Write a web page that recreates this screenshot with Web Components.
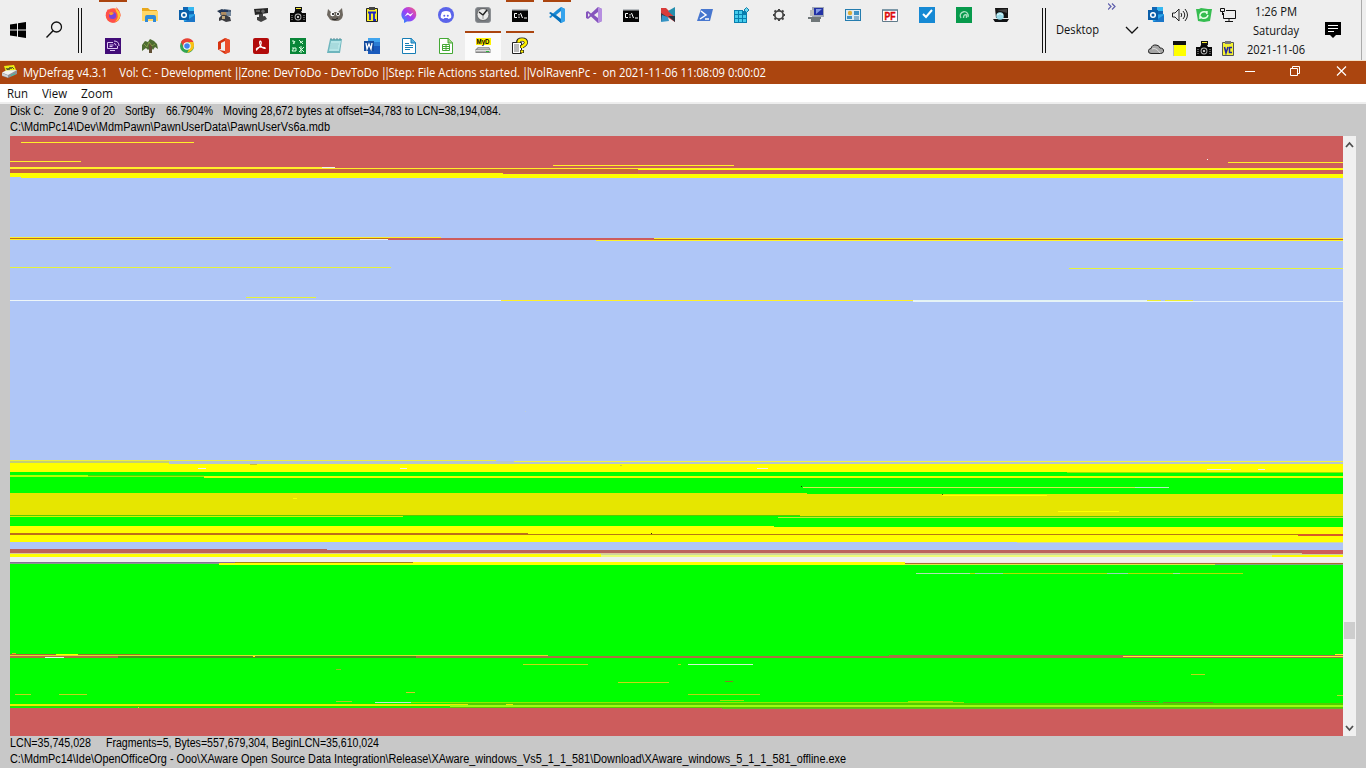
<!DOCTYPE html>
<html lang="en">
<head>
<meta charset="utf-8">
<title>MyDefrag v4.3.1</title>
<style>
html,body{margin:0;width:1366px;height:768px;overflow:hidden;background:#c8c8c8}
</style>
</head>
<body>
<desktop-screen></desktop-screen>
<script>
const ICONS = {
firefox:`<circle cx="8" cy="8.5" r="7.3" fill="#ff5a36"/><path d="M1 6 3 2 5 4Q9 0 12 3L11 0Q15 3 15.5 8C15 14 10 16 7 15.5Q1 14 1 6" fill="#ff4f4b"/><path d="M10 1Q15 4 15.3 8 15 13 10 15 15 10 11 4" fill="#ffc52f"/><circle cx="7.6" cy="8.5" r="3.6" fill="#7a45d8"/><path d="M4 6Q6 4 9 6L7 8 5 8" fill="#ff9a2a"/>`,
explorer:`<path d="M0 1h6l2 2h7v11H0z" fill="#e8a81c"/><path d="M0 4h16v10H0z" fill="#ffd766"/><path d="M3 15V10q0-2 2-2h7q2 0 2 2v5h-3v-3H6v3z" fill="#2f8ad8"/>`,
outlook:`<path d="M4 0h11v9H4z" fill="#1066b5"/><path d="M9 0h6v4H9z" fill="#35b8f1"/><path d="M4 8l12-1v8H5z" fill="#2aa4e8"/><path d="M5 15 16 8v7z" fill="#1a76c8"/><rect y="3" width="10" height="10" fill="#0a5ea8"/><circle cx="5" cy="8" r="2.3" fill="none" stroke="#fff" stroke-width="1.5"/>`,
scholar:`<path d="M1 4 6 2l4 2-5 3z" fill="#26364e"/><path d="M5 5 8 2l7 1v5l-6 2-5-2z" fill="#4d6078"/><circle cx="8" cy="6" r="3" fill="#b08d62"/><path d="M4 3h8v2H4z" fill="#24385c"/><path d="M10 5h5v4h-4z" fill="#75889c"/><path d="M3 11q3-4 6-3l5 2 1 4-5 1-4-2-3 1z" fill="#3c3c40"/><path d="M6 9h3v3H6z" fill="#c0a77c"/>`,
webcam:`<path d="M1 2 15 1v5L2 8z" fill="#262626"/><circle cx="10" cy="4.200" r="1.700" fill="#666"/><path d="M6 7h4v4H6zM4 10l8-1 2 3-6 3-4-2z" fill="#414141"/><path d="M3 4h4" stroke="#888"/>`,
camera:`<path d="M5 0h7v4H5z" fill="#111"/><path d="M6 1h5v1H6z" fill="#f7ec34"/><path d="M0 6h4l1-2h6l1 2h4v9H0z" fill="#080808"/><circle cx="8" cy="10" r="3.4" fill="#bbb"/><circle cx="8" cy="10" r="2.5" fill="#111"/><circle cx="8" cy="10" r="1" fill="#fff"/><path d="M2 8v5M14 8v5" stroke="#aaa" stroke-dasharray="1 1"/>`,
gimp:`<path d="M1 2 4 5h7l4-4 1 7q-1 6-7 6Q3 14 2 11L0 8z" fill="#6d675f"/><circle cx="5.500" cy="7" r="2.200" fill="#fff"/><circle cx="11" cy="7" r="2" fill="#fff"/><circle cx="6" cy="7" r="1"/><circle cx="11" cy="7" r="1"/><path d="M5 12q3 2 6-1" stroke="#222" fill="none"/>`,
clip:`<path d="M2.500 1.500h11v13h-11z" fill="#f7f02b" stroke="#222"/><path d="M5 0h6v3H5z" fill="#444"/><path d="M4 5.500h8M6 6v7M10 6v7h2" stroke="#1a22c9" stroke-width="1.800" fill="none"/>`,
messenger:`<defs><linearGradient id="m" x1="0" y1="1" x2="1" y2="0"><stop stop-color="#1595ff"/><stop offset=".5" stop-color="#a33bf5"/><stop offset="1" stop-color="#ff6178"/></linearGradient></defs><path d="M8 0a7.6 7.3 0 1 1-2 14.4L3 16v-3A7.4 7.4 0 0 1 8 0" fill="url(#m)"/><path d="m3.5 9.5 3-4 2.5 2 3.5-2-3 4-2.5-2z" fill="#fff"/>`,
discord:`<circle cx="8" cy="8" r="8" fill="#5b64ea"/><path d="M4 5q4-2 8 0 2 4 1 6l-2.5 1-1-1h-3l-1 1L3 11q-1-2 1-6" fill="#fff"/><circle cx="6.3" cy="8.7" r="1" fill="#5b64ea"/><circle cx="9.8" cy="8.7" r="1" fill="#5b64ea"/>`,
clock:`<rect x=".5" y=".5" width="15" height="15" rx="2.500" fill="#777b80" stroke="#8d9094"/><circle cx="8" cy="7.500" r="6" fill="#e9e9e9" stroke="#555" stroke-width=".8"/><path d="M4 5l4 3 4-5" stroke="#222" stroke-width="1.500" fill="none"/><path d="M8 8v4" stroke="#999"/>`,
cmd:`<path d="M0 2h16v13H0z" fill="#050505"/><path d="M0 2h16v1.500H0z" fill="#b8bcc0"/><path d="M5 6.500H2.500v4H5M7 7v1.500M7 9.500v1.500M8.500 6l2 5M12 11h3" stroke="#fff" fill="none"/>`,
vscode:`<path d="M12 0l4 2v12l-4 2L4 8.7 1.7 11 0 10l8-7zM12 4 7 8l5 4z" fill="#198ad5"/><path d="M0 6l1.7-1L12 12V16z" fill="#0870bb"/><path d="M12 0l4 2v12l-4 2z" fill="#36a4ed"/>`,
vs:`<path d="M12 0l4 2v12l-4 2L5 9.5 2 12 0 11V5l2-1 3 2.6zM12 5 8 8l4 3zM2 6v4l2-2z" fill="#8554bd"/><path d="M12 0l4 2v12l-4 2z" fill="#b68ee0"/>`,
neon:`<path d="M1 1 8 5v9H1z" fill="#303948"/><path d="m1 1 5 0 9 9v5L1 6z" fill="#d83b38"/><path d="M8 4l7-4v10l-4-3z" fill="#258fae"/><path d="m1 15 1-7 6 2 1 4z" fill="#3493c4"/><path d="m8 9 7 6V9z" fill="#263340"/>`,
ps:`<path d="M4 2h12l-3 12H0z" fill="#4777cf"/><path d="m4 4 5 4-6 4M8 12h4" stroke="#fff" stroke-width="1.5" fill="none"/>`,
reg:`<path d="M0 3h13v13H0z" fill="#087eae"/><path d="M1 4h3v3H1zm4 0h3v3H5zM1 8h3v3H1zm4 0h3v3H5zm4 0h3v3H9zM1 12h3v3H1zm4 0h3v3H5zm4 0h3v3H9z" fill="#45ccec"/><path d="M9 0h7v7h-3V4H9z" fill="#eee"/><path d="m12.500 .500 2.500 2.500-2.500 2.500L10 3z" fill="#6cdaf1" stroke="#167da8"/>`,
gear:`<circle cx="8" cy="8" r="4.200" fill="none" stroke="#444" stroke-width="1.800"/><path d="M8 2v2M8 12v2M2 8h2M12 8h2M3.500 3.500l1.500 1.500M11 11l1.500 1.500M12.500 3.500 11 5M5 11l-1.500 1.500" stroke="#444" stroke-width="2"/>`,
pc:`<path d="M4 0h12v10H4z" fill="#a0a7b5"/><path d="M6 1h9v7H6z" fill="#2332a5"/><path d="M8 2h6L8 7z" fill="#8399e5"/><path d="M7 10h5v2H7zM0 10h13v2H0zM3 12h9v3H3z" fill="#707779"/><path d="M2 3h4v6H2z" fill="#bbb"/>`,
card:`<path d="M0 2h16v12H0z" fill="#247cae"/><path d="M1 3h14v10H1z" fill="#dcebf3"/><circle cx="5" cy="6" r="2.2" fill="#dcac3b"/><path d="M2 9h5v3H2zM9 4h5v4H9z" fill="#3e91c6"/><path d="M9 10h5M9 12h5" stroke="#2e75a8"/>`,
pf:`<path d="M.5 2.5h15v12H.5z" fill="#fff" stroke="#607b8a"/><path d="M1 2h14v2H1z" fill="#7c98a8"/><text x="2.500" y="12.500" font-family="Liberation Sans" font-weight="700" font-size="10" textLength="11" lengthAdjust="spacingAndGlyphs" fill="#dc0808" stroke="#dc0808" stroke-width=".4">PF</text>`,
check:`<path d="M0 0h16v16H0z" fill="#1689d4"/><path d="m4 7 3 3 6-7" stroke="#fff" stroke-width="2" fill="none"/>`,
green:`<path d="M0 0h16v16H0z" fill="#079a4c"/><path d="M5 11a4 4 0 1 1 7-1M7.500 11q0-4 3-3v3" stroke="#a9dfbf" stroke-width="1.400" fill="none"/>`,
laptop:`<path d="M2 1h13v10H3z" fill="#151515"/><path d="M4 3 14 2v4z" fill="#444"/><path d="M0 12h16l-2 3H2z" fill="#101315"/><circle cx="7" cy="9" r="3.800" fill="#9bdbe9"/><path d="M4 8q3-3 6 0" stroke="#e7ffff" fill="none"/>`,
media:`<path d="M0 0h16v16H0z" fill="#420c78"/><path d="M8 4.500H2.500v6h10V8M5 12.500h5M4.500 7h4M4.500 8.500h3M9 3q5 0 5 5M9 5.500q2 0 2 2" stroke="#ddc7f2" fill="none"/>`,
tree:`<path d="M0 7 3 3 6 4 8 1l4 2 3 3 1 5-3-2-2 3-2-3-3 3-2-2-4 3z" fill="#4d6c31"/><path d="M7 6h3v9H7z" fill="#615035"/><path d="m2 6 3 3 2-5 3 4 3-2" stroke="#7f9b44" fill="none"/>`,
chrome:`<circle cx="8" cy="8" r="7" fill="#32a552"/><path d="M2 4A7.2 7.2 0 0 1 14.5 4H8L5 10z" fill="#e74235"/><path d="M14.5 4Q17 12 8 15l4-7-2-4z" fill="#fbc116"/><circle cx="8" cy="8" r="3.8" fill="#fff"/><circle cx="8" cy="8" r="2.8" fill="#3f83ed"/>`,
office:`<path d="M2 4 9 0l5 2v12l-5 2-6-4 6 1V3L5 5v6l-3 1z" fill="#d63311"/><path d="m9 0 5 2v12l-5 2z" fill="#ea4d2b"/>`,
acrobat:`<rect width="16" height="16" rx="2" fill="#b20b0b"/><path d="M7.500 3q2 2-1 6l-3 3q-1-2 4-3l4 .500q2 1 0 1-3-.500-4.500-4Q6 3 7.500 3z" fill="none" stroke="#fff" stroke-width="1.100"/>`,
xml:`<path d="M0 0h16v16H0z" fill="#098638"/><path d="M2 3h2v3M5 3 3 6M9 2l4 4M10 5l3-2M2 10h4v3H2l2-3M9 9l5 5M14 9l-5 5M11 8v7" stroke="#d9ffe1" fill="none"/>`,
notepad:`<path d="M3 1h12l-2 14H0z" fill="#6db5bd"/><path d="M4 3h10l-2 10H2z" fill="#b5e5e7"/><path d="M4 0v2M7 0v2M10 0v2M13 0v2" stroke="#568d98"/><path d="M4 6h8M3 8h8M3 10h8" stroke="#86bfc6" stroke-width=".6"/>`,
word:`<path d="M4 0h12v16H4z" fill="#185abd"/><path d="M4 0h12v4H4z" fill="#41a5ee"/><path d="M4 4h12v4H4z" fill="#2b7cd3"/><path d="M0 3h10v10H0z" fill="#144c9f"/><path d="m2 5 1 6 2-5 2 5 1-6" stroke="#fff" stroke-width="1.3" fill="none"/>`,
writer:`<path d="M1.5.5h9l4 4v11h-13z" fill="#fff" stroke="#167db5"/><path d="M10 0v5h5" fill="#5fb3df" stroke="#167db5"/><path d="M4 5.500h4M4 7.500h8M4 9.500h8M4 11.500h5" stroke="#167db5"/>`,
calc:`<path d="M1.5.5h9l4 4v11h-13z" fill="#fff" stroke="#44a834"/><path d="M10 0v5h5" fill="#a4d48b" stroke="#44a834"/><path d="M4.500 6.500h7v6h-7zM4 8.500h8M4 10.500h8M8 6v7" stroke="#44a834" fill="none"/>`,
myd:`<path d="M1 0h15v7H1z" fill="#fff200"/><text x="1.5" y="6" font-family="Liberation Sans" font-weight="700" font-size="7" textLength="13" lengthAdjust="spacingAndGlyphs">MyD</text><path d="m3 9 11 0 1.500 2.500v3.500h-15v-3.500z" fill="#858585"/><path d="m3.500 9.500h10l1 2h-12.500z" fill="#bbb"/><path d="M1 12h14v1.500H1z" fill="#ddd"/><path d="M11 13.500h3" stroke="#28b93a"/>`,
drive:`<path d="m2 2 10-1 2 5L4 8z" fill="#e9ee13"/><path d="m4 4 1.500 2L6 4l1 2 1-3 1 2 1-2 2 2" stroke="#333" fill="none" stroke-width=".8"/><path d="m0 9 4-2 11-1v4l-9 4-6-2z" fill="#8c9298"/><path d="m0 8.500 4-2 11-.500-9 5z" fill="#f3f3ee"/><path d="m0 9 6 2.500v2L0 11.500z" fill="#d1d5d7"/><path d="M9 11.500l4-1.500" stroke="#33c1a2"/>`,
help:`<path d="M.5 4.5h9v11h-9z" fill="#fff" stroke="#222"/><path d="M2 7h5M2 9h5M2 11h5M2 13h5" stroke="#777"/><path d="M6 4.500q0-3 4-3t4 3q0 2-4 4v1.500M10 12v3" stroke="#222" stroke-width="4" fill="none"/><path d="M6.500 4.500q0-3 3.500-3t4 3q0 2-4 4V10M10 12.500V14.500" stroke="#fff000" stroke-width="2.5" fill="none"/>`,
speaker:`<path d="M.5 6H3l4-4v12L3 10H.500zM9 6q1.500 2 0 4M11 4q3.500 4 0 8M13 2q5 6 0 12" fill="none" stroke="#222"/>`,
sync:`<path d="M0 2h3l2-1 7 1h4l-2 12-6 1-6-1z" fill="#35bd50"/><path d="M4 8q1-4 6-3l1 2V4M12 8q-1 4-6 3l-2-2v3" stroke="#eaffea" stroke-width="1.4" fill="none"/>`,
network:`<path d="M6 3.5h9.500v8H3.5V6M9 11v4M5 14.5h8M.5 1.5h4v3h-4zM2.5 5v3" fill="none" stroke="#111"/>`,
cloud:`<path d="M3 12.500Q0 12.500.500 9.500 1 7.500 3 7.500q1-4 5-3.500 3 0 4 3 4 0 3.500 3.500-.5 2-3 2z" fill="#a5a5a5" stroke="#222"/><path d="M4 8q4-2 8 4" stroke="#ddd" fill="none"/>`,
note:`<path d="M1 0h13v15H1z" fill="#ff0"/><path d="M1 0h13v4H1z" fill="#111"/><path d="M1.5 4v11" stroke="#bbb"/>`,
clipvc:`<path d="M2.500 1.500h11v13h-11z" fill="#f5f330" stroke="#555"/><path d="M5 0h6v3H5z" fill="#777"/><path d="m4.500 6 1.500 6 2-6M12 6.500H9.500v5H12" stroke="#2423a5" stroke-width="1.500" fill="none"/>`
};
const define=(name,css,html,ready)=>customElements.define(name,class extends HTMLElement{
  constructor(){super();this.attachShadow({mode:'open'});}
  connectedCallback(){this.shadowRoot.innerHTML=`<style>*{box-sizing:border-box}${css}</style>${typeof html==='function'?html(this):html}`;if(ready)ready(this);}
});

/* Text whose glyphs are condensed to a given line width. */
define('fit-text',`:host{display:block;white-space:pre;flex:none}span{display:inline-block;transform-origin:0 50%}`,
 '<span><slot></slot></span>',el=>{
  const w=+el.getAttribute('w');el.style.width=w+'px';
  const s=el.shadowRoot.querySelector('span');
  s.style.transform=`scaleX(${w/s.getBoundingClientRect().width})`;
});
define('app-icon',':host{display:block;width:16px;height:16px;flex:none}svg{display:block;overflow:visible}',
 el=>`<svg width="16" height="16" viewBox="0 0 16 16">${ICONS[el.getAttribute('name')]}</svg>`);
define('task-button',`:host{display:block;width:37px;height:31px;padding:7px 0 0 11px;background:linear-gradient(#ab450f,#ab450f) 5px 0/0 2px no-repeat}
 :host([open]){background-size:28px 2px}
 :host([active]){background:linear-gradient(#ab450f,#ab450f) 1px 0/36px 2px no-repeat,linear-gradient(#fbfbfb,#fbfbfb) 1px 0/36px 29px no-repeat}`,
 el=>`<app-icon name="${el.getAttribute('icon')}"></app-icon>`);
define('grip-bars',':host{display:block;width:4px;height:45px;margin-top:8px;border:solid #111;border-width:0 1px;flex:none}','');

const top1='firefox* explorer outlook scholar webcam camera gimp clip messenger discord clock cmd* vscode* vs cmd neon ps reg gear pc card pf check green laptop'.split(' ');
const top2='media tree chrome office acrobat xml notepad word writer calc myd! help*'.split(' ');
const btn=s=>`<task-button icon="${s.replace(/[*!]/,'')}"${s.endsWith('*')?' open':''}${s.endsWith('!')?' active':''}></task-button>`;
define('task-list',':host{display:block;width:925px}.r{display:flex;height:31px}.r+.r{height:30px}',
 `<div class="r">${top1.map(btn).join('')}</div><div class="r">${top2.map(btn).join('')}</div>`);
define('system-tray',':host{display:grid;grid-template-columns:repeat(4,16px);gap:15px 8px;padding-top:7px;width:88px;flex:none}',
 'outlook speaker sync network cloud note camera clipvc'.split(' ').map(n=>`<app-icon name="${n}"></app-icon>`).join(''));
define('tray-clock',':host{display:flex;flex-direction:column;align-items:center;width:80px;padding-top:2px;line-height:19px;flex:none}',
 '<fit-text w="42">1:26 PM</fit-text><fit-text w="46">Saturday</fit-text><fit-text w="58">2021-11-06</fit-text>');
define('task-bar',`:host{display:flex;height:61px;background:#eee;border-bottom:1px solid #f3dfc8;font:12px "Open Sans",sans-serif;color:#111}
 .s{margin:22px 0 0 10px;width:16px;flex:none}.q{margin:21px 0 0 20px;width:18px;flex:none}svg{display:block}
 .g1{margin-left:14px}task-list{margin-left:12px;flex:none}.g2{margin-left:23px}
 .d{margin:21px 0 0 10px;line-height:18px}.c{margin:1px 0 0 9px;width:32px;flex:none}system-tray{margin-left:8px}.n{margin:22px 0 0 9px;flex:none}.e{margin-left:20px;width:1px;background:#aaa}`,
`<svg class="s" width="16" height="16"><path d="M0 2.5 7 1.5v6H0zM8 1.3 16 0v7.5H8zM0 8.5h7v6l-7-1zM8 8.5h8V16l-8-1.2z" fill="#000"/></svg>
<svg class="q" width="18" height="18"><circle cx="10.5" cy="6" r="5" fill="none" stroke="#111" stroke-width="1.3"/><path d="m7 9.7-6.5 6.8" stroke="#111" stroke-width="1.4"/></svg>
<grip-bars class="g1"></grip-bars><task-list></task-list><grip-bars class="g2"></grip-bars>
<fit-text class="d" w="43">Desktop</fit-text>
<svg class="c" width="32" height="40"><path d="m0 2.500 3 3-3 3M4 2.500l3 3-3 3" fill="none" stroke="#5c5cab" stroke-width="1.200"/><path d="m18 26 6 6 6-6" fill="none" stroke="#111" stroke-width="1.3"/></svg>
<system-tray></system-tray><tray-clock></tray-clock>
<svg class="n" width="16" height="17"><path d="M0 0h16v13h-5l-3 3-3-3H0z" fill="#000"/><path d="M3 3.500h10M3 6.500h10M3 9.500h6" stroke="#fff"/></svg><span class="e"></span>`);

define('window-title',`:host{display:flex;height:23px;background:#ab450f;color:#fff;font:12px/23px "Open Sans",sans-serif;padding-left:2px}
 app-icon{margin-top:3px}fit-text{margin-left:5px}i{font-style:normal;letter-spacing:-3px;margin:0 1px 0 -1px}.b{margin-left:auto;display:block}`,
`<app-icon name="drive"></app-icon><fit-text w="743">MyDefrag v4.3.1    Vol: C: - Development <i>||</i> Zone: DevToDo - DevToDo <i>||</i> Step: File Actions started. <i>||</i> VolRavenPc -  on 2021-11-06 11:08:09 0:00:02</fit-text>
<svg class="b" width="122" height="23" fill="none" stroke="#fff"><path d="M1 10.500h10M46.500 7.500h7v7h-7zM48.500 7v-1.500h7v7H54"/><path d="M93 5.500l9 9M102 5.500l-9 9" stroke-width="1.200"/></svg>`,
 el=>{
  /* The separators sit tight against the word that follows them. */
  const t=el.shadowRoot.querySelector('fit-text');
  for(const i of t.querySelectorAll('i'))i.nextSibling.data=i.nextSibling.data.slice(1);
  const s=t.shadowRoot.querySelector('span');s.style.transform='none';
  s.style.transform=`scaleX(${743/s.getBoundingClientRect().width})`;
 });
define('menu-bar',`:host{display:flex;height:20px;background:#fff;border-bottom:2px solid #eee;color:#111;font:12px/20px "Open Sans",sans-serif;padding-left:7px;gap:14px}`,
 '<fit-text w="21">Run</fit-text><fit-text w="25">View</fit-text><fit-text w="32">Zoom</fit-text>');

/* Cluster runs: colour, x, row, width, rows. */
const R='#cd5c5c',B='#afc6f7',G='#00ff00',Y='#ffff00',O='#e6e600',D='#bd7018',L='#fff02a',W='#f0f0f0',P='#55cc00',M='#99ff11',T='#c3cf75',S='#b46a4c';
const runs=[
[R,10,136,1333,42],[L,21,142,173,1],[L,1228,162,115,1],[W,1207,159,1,1],
[L,10,161,71,1],[L,553,165,181,1],[L,10,167,312,1],[W,322,167,13,1],[L,10,168,1333,1],[Y,638,169,705,1],
['#c8653c',10,169,628,4],[Y,10,173,493,5],[Y,503,174,840,4],[R,503,173,840,1],
[B,10,178,1333,283],[B,10,177,11,1],
[L,10,237,431,1],[D,10,238,378,1],[L,10,239,350,1],[W,360,239,28,1],[R,388,238,266,2],[L,654,238,689,1],[D,654,239,689,1],[L,596,240,747,1],
['#e6f23c',10,267,381,1],['#e6f23c',1069,268,274,1],['#e6f23c',246,297,70,1],['#eef6f8',10,300,491,1],[L,501,300,412,1],['#e4f4f2',913,300,234,1],['#e7f3f8',913,301,430,1],['#eeee30',1147,300,14,1],['#eeee30',1165,300,28,1],['#becfd9',525,411,1,1],
['#eef040',10,460,486,1],[T,10,461,159,2],['#b6c5d0',169,461,1174,3],['#f2f440',514,461,829,1],
[Y,10,463,159,9],[Y,169,464,1174,8],['#d0c020',250,464,7,1],['#d0d040',620,465,2,1],
[W,198,468,8,1],[W,400,468,7,1],[W,757,468,11,1],[W,1207,469,24,1],[W,1258,469,7,1],
[G,10,472,1333,54],['#95e500',1067,472,276,1],['#b7ff00',10,475,78,2],['#50d800',88,475,116,1],['#a0f000',88,476,116,1],['#f4fb00',204,476,1139,2],
['#d8e850',803,487,332,1],['#b8edc0',1135,487,34,1],['#163b00',801,486,1,1],
[O,10,493,797,22],[O,807,494,536,21],[O,800,515,543,1],[P,10,515,790,1],['#d9f000',10,516,393,1],[P,800,516,543,1],['#c9e632',778,517,565,1],
[Y,293,498,4,1],[Y,942,495,105,1],[Y,1058,511,61,1],['#555500',942,494,1,1],
[Y,10,526,1333,16],[G,774,526,569,1],[D,10,533,518,2],['#b87712',528,534,815,1],['#d85b25',1298,534,45,2],['#333300',651,533,1,1],
[B,10,542,1333,8],['#d1d99f',1017,542,326,1],
['#bc615d',10,549,317,4],['#bc615d',327,550,1016,3],[R,1302,550,41,4],
['#dac996',10,553,1292,1],[Y,10,554,591,3],['#cdd49e',601,554,742,1],['#eefa78',601,555,742,2],[Y,1272,555,71,2],
['#f0f0ef',10,557,1333,5],['#876e98',10,562,225,1],['#8c9b90',10,563,209,1],['#a58510',235,562,178,1],[Y,219,563,686,2],[Y,413,562,492,2],
['#f4e8e4',905,562,438,1],['#a96a30',905,563,438,1],['#e3e64a',905,564,310,1],['#83a48b',1215,564,128,1],
[G,10,564,209,144],[G,219,565,1124,143],
['#b0e0b4',916,573,54,1],['#b2e000',970,573,5,1],['#9ad5af',975,573,28,1],['#b2e000',1003,573,104,1],['#99d5b5',1107,573,21,1],['#b2e000',1128,573,45,1],['#a8dca8',1173,573,7,1],['#b2e000',1180,573,63,1],
['#d9b91a',12,653,4,1],['#b56235',10,654,46,1],[Y,56,654,22,1],['#9b7924',78,654,62,1],['#d8e628',10,655,538,1],['#b76a43',10,656,108,2],['#4c8f22',118,656,298,2],['#aa6e45',416,656,473,2],['#a77148',889,655,454,3],[L,1123,656,220,1],[L,1335,654,8,1],[W,45,657,19,1],[Y,253,656,2,1],
['#c8da14',523,664,65,1],['#b5da14',678,664,3,1],['#d0f5d2',688,664,65,1],['#95bf22',336,669,5,1],['#c8d715',618,682,51,1],['#8a7925',725,681,8,1],['#bcd918',1191,674,14,1],
['#c0d71d',15,694,16,1],['#c0d71d',59,694,28,1],['#d6c72b',406,692,9,1],['#bad516',688,694,72,1],['#b4ce20',336,701,16,1],
['#c5eed0',375,702,36,1],['#93e900',411,702,553,1],['#a5e100',720,700,24,1],['#a4e900',908,701,45,1],['#8f8427',1131,701,28,1],['#709227',1163,702,50,1],['#b5df22',1337,695,6,1],
['#e9ef00',10,704,440,2],['#31d900',10,706,440,1],[P,450,703,893,2],[M,450,705,893,2],[P,450,707,893,1],['#e6f000',450,704,18,1],['#e6f000',506,704,7,1],
[R,10,708,1333,28],['#61bd20',722,708,621,1],['#d9e81b',138,707,1,1]
];
define('cluster-map',':host{display:block;width:1333px;height:600px;flex:none}svg{display:block}',
 `<svg width="1333" height="600" viewBox="10 136 1333 600" shape-rendering="crispEdges">${runs.map(([c,x,y,w,h])=>`<rect x="${x}" y="${y}" width="${w}" height="${h}" fill="${c}"/>`).join('')}</svg>`);
define('map-scrollbar',`:host{display:flex;flex-direction:column;width:13px;height:600px;background:#f0f0f0;flex:none}
 .t{width:11px;height:17px;margin:469px 1px auto;background:#cdcdcd}svg{display:block;flex:none}`,
 `<svg width="13" height="17"><path d="M3 11 6.500 7 10 11" fill="none" stroke="#505050" stroke-width="1.800"/></svg><div class="t"></div><svg width="13" height="17"><path d="M3 7 6.500 11 10 7" fill="none" stroke="#505050" stroke-width="1.800"/></svg>`);
define('status-line',':host{display:flex;height:16px;font:12px/15px "Liberation Sans",sans-serif;color:#000;padding-left:10px}','<slot></slot>');
define('defrag-window',`:host{display:block;height:707px;background:#c8c8c8}.m{display:flex;padding-left:10px}.a{display:block;height:32px}.g{margin-left:10px}`,
`<window-title></window-title><menu-bar></menu-bar>
<div class="a"><status-line><fit-text w="34">Disk C:</fit-text><fit-text w="61" class="g">Zone 9 of 20</fit-text><fit-text w="30" class="g">SortBy</fit-text><fit-text w="47" style="margin-left:11px">66.7904%</fit-text><fit-text w="278" class="g">Moving 28,672 bytes at offset=34,783 to LCN=38,194,084.</fit-text></status-line>
<status-line><fit-text w="320">C:\\MdmPc14\\Dev\\MdmPawn\\PawnUserData\\PawnUserVs6a.mdb</fit-text></status-line></div>
<div class="m"><cluster-map></cluster-map><map-scrollbar></map-scrollbar></div>
<status-line><fit-text w="81">LCN=35,745,028</fit-text><fit-text w="273" style="margin-left:15px">Fragments=5, Bytes=557,679,304, BeginLCN=35,610,024</fit-text></status-line>
<status-line><fit-text w="836">C:\\MdmPc14\\Ide\\OpenOfficeOrg - Ooo\\XAware Open Source Data Integration\\Release\\XAware_windows_Vs5_1_1_581\\Download\\XAware_windows_5_1_1_581_offline.exe</fit-text></status-line>`);
define('desktop-screen',':host{display:block;width:1366px;height:768px;overflow:hidden}','<task-bar></task-bar><defrag-window></defrag-window>');
</script>
</body>
</html>
